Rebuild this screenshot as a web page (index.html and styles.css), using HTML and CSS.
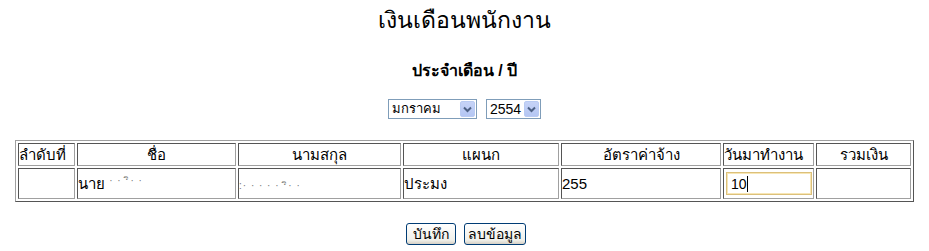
FILE: index.html
```html
<!DOCTYPE html>
<html lang="th">
<head>
<meta charset="utf-8">
<link rel="stylesheet" href="styles.css">
</head>
<body>
<div class="page">
  <h1 class="title">เงินเดือนพนักงาน</h1>
  <h2 class="subtitle">ประจำเดือน / ปี</h2>
  <div class="pickers">
    <div class="select sel-month"><span class="sel-text">มกราคม</span><span class="sel-btn"><svg width="9" height="7" viewBox="0 0 9 7"><path d="M1 1.5 L4.5 5 L8 1.5" fill="none" stroke="#4d6185" stroke-width="2"/></svg></span></div>
    <div class="select sel-year"><span class="sel-text">2554</span><span class="sel-btn"><svg width="9" height="7" viewBox="0 0 9 7"><path d="M1 1.5 L4.5 5 L8 1.5" fill="none" stroke="#4d6185" stroke-width="2"/></svg></span></div>
  </div>
  <table class="grid">
    <colgroup>
      <col class="c1"><col class="c2"><col class="c3"><col class="c4"><col class="c5"><col class="c6"><col class="c7">
    </colgroup>
    <tr class="head">
      <td class="left">ลำดับที่</td>
      <td>ชื่อ</td>
      <td>นามสกุล</td>
      <td>แผนก</td>
      <td>อัตราค่าจ้าง</td>
      <td class="left">วันมาทำงาน</td>
      <td>รวมเงิน</td>
    </tr>
    <tr class="body">
      <td></td>
      <td>นาย <span class="blur">· · ·ิ· ·</span></td>
      <td><span class="blur low">:· · ·  · · ·ิ· ·</span></td>
      <td>ประมง</td>
      <td>255</td>
      <td><div class="inp">10<span class="caret"></span></div></td>
      <td></td>
    </tr>
  </table>
  <div class="actions">
    <button class="btn">บันทึก</button>
    <button class="btn btn-narrow">ลบข้อมูล</button>
  </div>
</div>
</body>
</html>
```
FILE: styles.css
```css
html, body {
  margin: 0;
  padding: 0;
  background: #ffffff;
}
body {
  font-family: "Liberation Sans", "Noto Sans", "DejaVu Sans", sans-serif;
  color: #000;
  width: 929px;
  height: 251px;
  overflow: hidden;
}
.page {
  display: flex;
  flex-direction: column;
  align-items: center;
}
.title {
  margin: 6px 0 0 0;
  font-size: 23px;
  font-weight: normal;
  line-height: 28px;
}
.subtitle {
  margin: 26px 0 0 0;
  font-size: 16px;
  font-weight: bold;
  line-height: 22px;
}
.pickers {
  margin-top: 17px;
  display: flex;
  gap: 9px;
}
.select {
  height: 18px;
  border: 1px solid #7f9db9;
  display: flex;
  align-items: stretch;
  background: #fff;
  font-size: 13px;
}
.sel-month { width: 87px; }
.sel-year { width: 53px; }
.sel-text {
  flex: 1;
  padding-left: 3px;
  line-height: 18px;
}
.sel-year .sel-text { font-size: 14px; }
.sel-btn {
  width: 15px;
  margin: 1px;
  background: linear-gradient(#c6d3f7, #b4c6f3);
  border: 1px solid #b9cbf3;
  border-radius: 2px;
  display: flex;
  align-items: center;
  justify-content: center;
  box-sizing: border-box;
}
.grid {
  margin-top: 21px;
  width: 899px;
  table-layout: fixed;
  border-collapse: separate;
  border-spacing: 2px;
  border: 1px solid;
  border-color: #a0a0a0 #555 #555 #a0a0a0;
  font-size: 15px;
}
.grid td {
  box-sizing: border-box;
  border: 1px solid;
  border-color: #555 #a0a0a0 #a0a0a0 #555;
  padding: 0;
  text-align: left;
  white-space: nowrap;
  overflow: hidden;
}
.c1 { width: 57px; }
.c2 { width: 159px; }
.c3 { width: 163px; }
.c4 { width: 156px; }
.c5 { width: 160px; }
.c6 { width: 91px; }
.c7 { width: 95px; }
.head td {
  text-align: center;
  height: 23px;
  line-height: 21px;
}
.head td.left { text-align: left; }
.body td {
  height: 31px;
}
.blur {
  color: #777;
  font-size: 10px;
  letter-spacing: 1px;
  vertical-align: 5px;
}
.blur.low {
  vertical-align: 0;
}
.inp {
  width: 86px;
  height: 23px;
  margin-left: 2px;
  border: 1px solid #dcc07a;
  box-shadow: inset 0 0 0 1px #f7e6b5;
  box-sizing: border-box;
  padding-left: 4px;
  font-size: 14px;
  display: flex;
  align-items: center;
}
.caret {
  display: inline-block;
  width: 1px;
  height: 16px;
  background: #000;
}
.actions {
  margin-top: 21px;
  display: flex;
  gap: 8px;
  padding-left: 2px;
}
.btn {
  font-family: inherit;
  font-size: 14px;
  height: 22px;
  padding: 0 6px;
  border: 1px solid #003c74;
  border-radius: 3px;
  background: linear-gradient(#ffffff, #f0f0ea 80%, #d6d0c5);
  color: #000;
  line-height: 18px;
}
.btn-narrow {
  padding: 0 3px;
}
```
